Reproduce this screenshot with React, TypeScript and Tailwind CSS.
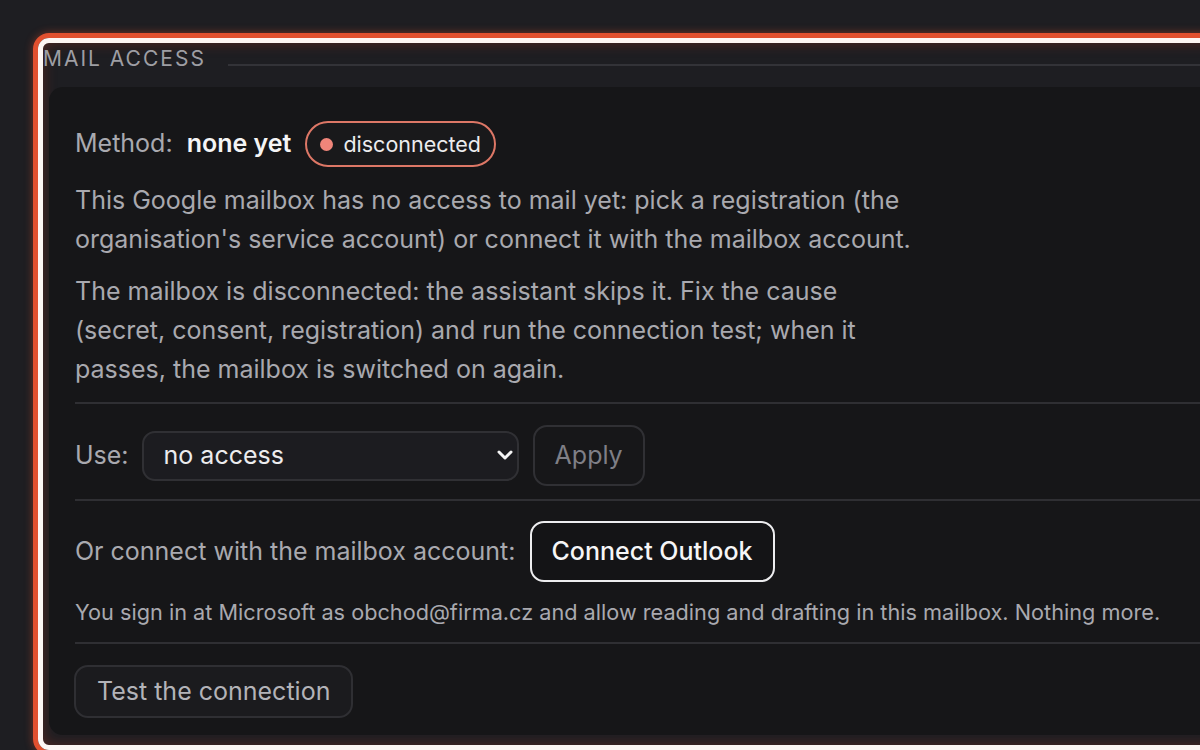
import { useState } from 'react';

const FONT = { fontFamily: 'Inter, "Noto Sans", sans-serif' };

function Chevron() {
  return (
    <svg width="16" height="10" viewBox="0 0 16 10" fill="none">
      <path d="M2 2l6 6 6-6" stroke="#f4f4f5" strokeWidth="3" strokeLinecap="round" strokeLinejoin="round" />
    </svg>
  );
}

function Divider({ top = 13 }: { top?: number }) {
  return <div className={`h-[2px] bg-[#2f2f33] ${top === 13 ? 'mt-[13px]' : 'mt-[15px]'}`} />;
}

export default function App() {
  const [access, setAccess] = useState('none');

  return (
    <div className="w-[1200px] h-[750px] overflow-hidden bg-[#1e1e22] pt-[33px] pl-[33px]" style={FONT}>
      {/* highlighted section frame: orange outline + white ring */}
      <div className="w-[1220px] h-[722px] rounded-[16px] border-[5px] border-[#e1502f] shadow-[0_0_8px_rgba(225,80,47,0.45)]">
        <div className="h-full rounded-[11px] border-[5px] border-[#fdf6f4]">
          <div className="h-full flex flex-col rounded-[6px] shadow-[inset_0_0_14px_rgba(190,60,40,0.35)]">
            <div className="flex items-start h-[44px] shrink-0 pt-[2px]">
              <span className="text-[21px] leading-[28px] tracking-[0.095em] text-[#9e9ea4]">MAIL ACCESS</span>
              <div className="flex-1 h-[2px] bg-[#333338] ml-[22px] mt-[19px]" />
            </div>

            <div className="flex-1 ml-[6px] mb-[10px] rounded-l-[14px] bg-[#161618] pt-[34px] pl-[26px] pr-[40px]">
              <div className="flex items-center gap-[14px] h-[46px]">
                <span className="text-[25px] text-[#a9a9af]">Method:</span>
                <span className="text-[25px] font-semibold text-[#f4f4f5]">none yet</span>
                <span className="flex items-center h-[46px] px-[13px] gap-[10px] rounded-full border-2 border-[#dd7766] bg-[#19191b] text-[21.5px] text-[#ececee]">
                  <span className="w-[13px] h-[13px] rounded-full bg-[#f0857a]" />
                  disconnected
                </span>
              </div>

              <p className="mt-[14px] max-w-[850px] text-[25px] leading-[39px] text-[#a9a9af]">
                This Google mailbox has no access to mail yet: pick a registration (the organisation's service account) or connect it with the mailbox account.
              </p>
              <p className="mt-[13px] max-w-[850px] text-[25px] leading-[39px] text-[#a9a9af]">
                The mailbox is disconnected: the assistant skips it. Fix the cause (secret, consent, registration) and run the connection test; when it passes, the mailbox is switched on again.
              </p>

              <Divider />

              <div className="flex items-center gap-[14px] mt-[21px] h-[61px]">
                <span className="text-[25px] text-[#a9a9af]">Use:</span>
                <div className="relative w-[377px] h-[50px] -ml-[1px]">
                  <select
                    value={access}
                    onChange={(e) => setAccess(e.target.value)}
                    className="appearance-none w-full h-full rounded-[13px] border-2 border-[#303034] bg-[#1c1c20] pl-[20px] text-[25px] text-[#ececee] outline-none"
                  >
                    <option value="none">no access</option>
                    <option value="sa">service account</option>
                  </select>
                  <span className="absolute right-[6px] top-[19px] pointer-events-none">
                    <Chevron />
                  </span>
                </div>
                <button className="h-[61px] px-[20px] rounded-[14px] border-2 border-[#303034] bg-[#171719] text-[25px] text-[#7f7f86]">
                  Apply
                </button>
              </div>

              <Divider />

              <div className="flex items-center gap-[14px] mt-[20px]">
                <span className="text-[25px] text-[#a9a9af]">Or connect with the mailbox account:</span>
                <button className="h-[61px] px-[20px] rounded-[14px] border-2 border-[#ededef] bg-[#141416] text-[25px] font-medium text-[#f6f6f7]">
                  Connect Outlook
                </button>
              </div>
              <p className="mt-[15px] text-[21.7px] leading-[30px] text-[#a9a9af]">
                You sign in at Microsoft as obchod@firma.cz and allow reading and drafting in this mailbox. Nothing more.
              </p>

              <Divider top={15} />

              <button className="mt-[21px] -ml-[1px] h-[53px] px-[21px] rounded-[14px] border-2 border-[#2f2f33] bg-[#1b1b1e] text-[25px] text-[#b3b3b8]">
                Test the connection
              </button>
            </div>
          </div>
        </div>
      </div>
    </div>
  );
}
